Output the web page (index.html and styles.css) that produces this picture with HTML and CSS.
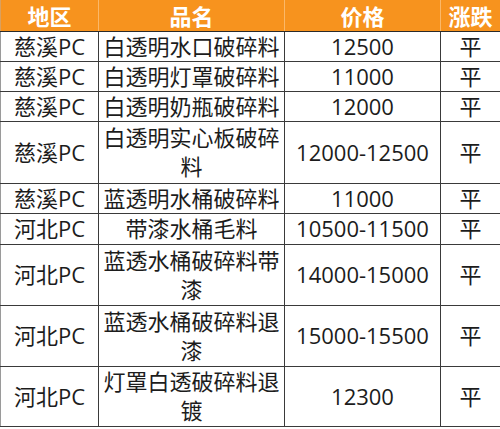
FILE: index.html
```html
<!DOCTYPE html>
<html lang="zh">
<head>
<meta charset="utf-8">
<link rel="stylesheet" href="styles.css">
</head>
<body>
<table class="price-table">
  <colgroup>
    <col class="c-region">
    <col class="c-name">
    <col class="c-price">
    <col class="c-trend">
  </colgroup>
  <thead>
    <tr class="h-head"><th>地区</th><th>品名</th><th>价格</th><th>涨跌</th></tr>
  </thead>
  <tbody>
    <tr class="h-29"><td>慈溪PC</td><td>白透明水口破碎料</td><td>12500</td><td>平</td></tr>
    <tr class="h-30"><td>慈溪PC</td><td>白透明灯罩破碎料</td><td>11000</td><td>平</td></tr>
    <tr class="h-30"><td>慈溪PC</td><td>白透明奶瓶破碎料</td><td>12000</td><td>平</td></tr>
    <tr class="h-62"><td>慈溪PC</td><td>白透明实心板破碎料</td><td>12000-12500</td><td>平</td></tr>
    <tr class="h-30"><td>慈溪PC</td><td>蓝透明水桶破碎料</td><td>11000</td><td>平</td></tr>
    <tr class="h-31"><td>河北PC</td><td>带漆水桶毛料</td><td>10500-11500</td><td>平</td></tr>
    <tr class="h-61"><td>河北PC</td><td>蓝透水桶破碎料带漆</td><td>14000-15000</td><td>平</td></tr>
    <tr class="h-61"><td>河北PC</td><td>蓝透水桶破碎料退漆</td><td>15000-15500</td><td>平</td></tr>
    <tr class="h-60"><td>河北PC</td><td>灯罩白透破碎料退镀</td><td>12300</td><td>平</td></tr>
  </tbody>
</table>
</body>
</html>
```

FILE: styles.css
```css
html, body {
  margin: 0;
  padding: 0;
  background: #ffffff;
}

.price-table {
  width: 500px;
  border-collapse: collapse;
  table-layout: fixed;
  font-family: "Open Sans", "Noto Sans CJK SC", sans-serif;
  color: #1c1c1c;
}

.c-region { width: 98px; }
.c-name { width: 186px; }
.c-price { width: 156px; }
.c-trend { width: 60px; }

.price-table th,
.price-table td {
  padding: 0 2px;
  text-align: center;
  vertical-align: middle;
  font-size: 22px;
  line-height: 29px;
  border: 1px solid #3a3a3a;
}

.price-table th {
  background: #f7931e;
  color: #ffffff;
  font-family: "Noto Sans CJK SC", sans-serif;
  font-weight: 700;
  font-size: 22px;
  border-top: none;
  border-left-color: #fbb868;
  border-right-color: #fbb868;
  border-bottom: 1px solid #2a2a2a;
}

.price-table th:first-child { border-left: 1px solid #d9a060; }
.price-table th:last-child { border-right: 1px solid #d9a060; }

.price-table td:first-child { border-left-color: #9a9a9a; }

.h-head { height: 31px; }
.h-29 { height: 29px; }
.h-30 { height: 30px; }
.h-31 { height: 31px; }
.h-60 { height: 60px; }
.h-61 { height: 61px; }
.h-62 { height: 62px; }
```
